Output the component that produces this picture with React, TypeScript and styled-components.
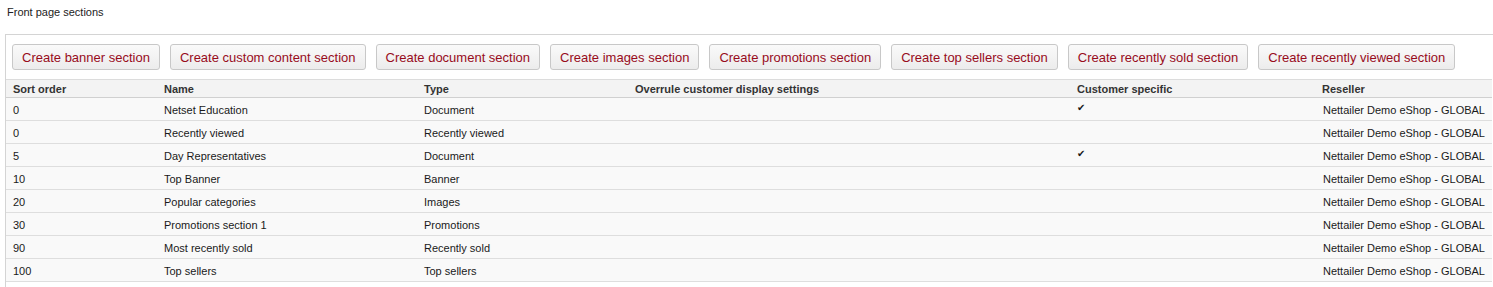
import styled, { createGlobalStyle } from "styled-components"

const GlobalStyle = createGlobalStyle`
  body {
    margin: 0;
    font-family: "Liberation Sans", Arial, sans-serif;
    background: #ffffff;
    color: #222222;
    overflow: hidden;
  }
`

const Page = styled.div`
  padding: 6px 0 0 5px;
`

const Title = styled.div`
  font-size: 11px;
  line-height: 13px;
  padding-left: 2px;
  margin-bottom: 15px;
  color: #222;
`

const Panel = styled.div`
  border: 1px solid #d4d4d4;
  border-right: none;
  width: 1500px;
  padding-bottom: 12px;
  background: #ffffff;
`

const Toolbar = styled.div`
  display: flex;
  gap: 10px;
  padding: 9px 6px 9px;
`

const Button = styled.button`
  font-family: "Liberation Sans", Arial, sans-serif;
  font-size: 13px;
  height: 26px;
  padding: 0 9px;
  color: #980c1c;
  background: linear-gradient(#fafafa, #ececec);
  border: 1px solid #c8c8c8;
  border-radius: 3px;
  cursor: pointer;
  white-space: nowrap;
`

const Table = styled.table`
  border-collapse: collapse;
  table-layout: fixed;
  width: 1486px;
  font-size: 11px;
`

const HeadCell = styled.th<{ w: number }>`
  box-sizing: border-box;
  width: ${({ w }) => w}px;
  text-align: left;
  font-weight: bold;
  color: #333;
  background: #f3f3f3;
  height: 18px;
  padding: 0 7px;
  border-top: 1px solid #dcdcdc;
  border-bottom: 1px solid #d0d0d0;
`

const Row = styled.tr`
  background: #f9f9f9;
`

const Cell = styled.td<{ right?: boolean }>`
  height: 21px;
  padding: 1px 7px 0;
  text-align: ${({ right }) => (right ? "right" : "left")};
  border-bottom: 1px solid #dedede;
  color: #1a1a1a;
  white-space: nowrap;
`

const Check = styled.span`
  font-size: 10px;
  position: relative;
  top: -3px;
`

const buttons = [
  "Create banner section",
  "Create custom content section",
  "Create document section",
  "Create images section",
  "Create promotions section",
  "Create top sellers section",
  "Create recently sold section",
  "Create recently viewed section",
]

const columns = [
  { title: "Sort order", w: 151 },
  { title: "Name", w: 260 },
  { title: "Type", w: 211 },
  { title: "Overrule customer display settings", w: 442 },
  { title: "Customer specific", w: 245 },
  { title: "Reseller", w: 177 },
]

const rows = [
  { sort: 0, name: "Netset Education", type: "Document", specific: true },
  { sort: 0, name: "Recently viewed", type: "Recently viewed", specific: false },
  { sort: 5, name: "Day Representatives", type: "Document", specific: true },
  { sort: 10, name: "Top Banner", type: "Banner", specific: false },
  { sort: 20, name: "Popular categories", type: "Images", specific: false },
  { sort: 30, name: "Promotions section 1", type: "Promotions", specific: false },
  { sort: 90, name: "Most recently sold", type: "Recently sold", specific: false },
  { sort: 100, name: "Top sellers", type: "Top sellers", specific: false },
]

const App = () => {
  return (
    <>
      <GlobalStyle />
      <Page>
        <Title>Front page sections</Title>
        <Panel>
          <Toolbar>
            {buttons.map((label) => (
              <Button key={label}>{label}</Button>
            ))}
          </Toolbar>
          <Table>
            <thead>
              <tr>
                {columns.map((col) => (
                  <HeadCell key={col.title} w={col.w}>
                    {col.title}
                  </HeadCell>
                ))}
              </tr>
            </thead>
            <tbody>
              {rows.map((row, index) => (
                <Row key={`row-${index}-${row.name}`}>
                  <Cell>{row.sort}</Cell>
                  <Cell>{row.name}</Cell>
                  <Cell>{row.type}</Cell>
                  <Cell />
                  <Cell>{row.specific && <Check>✔</Check>}</Cell>
                  <Cell right>Nettailer Demo eShop - GLOBAL</Cell>
                </Row>
              ))}
            </tbody>
          </Table>
        </Panel>
      </Page>
    </>
  )
}

export default App
